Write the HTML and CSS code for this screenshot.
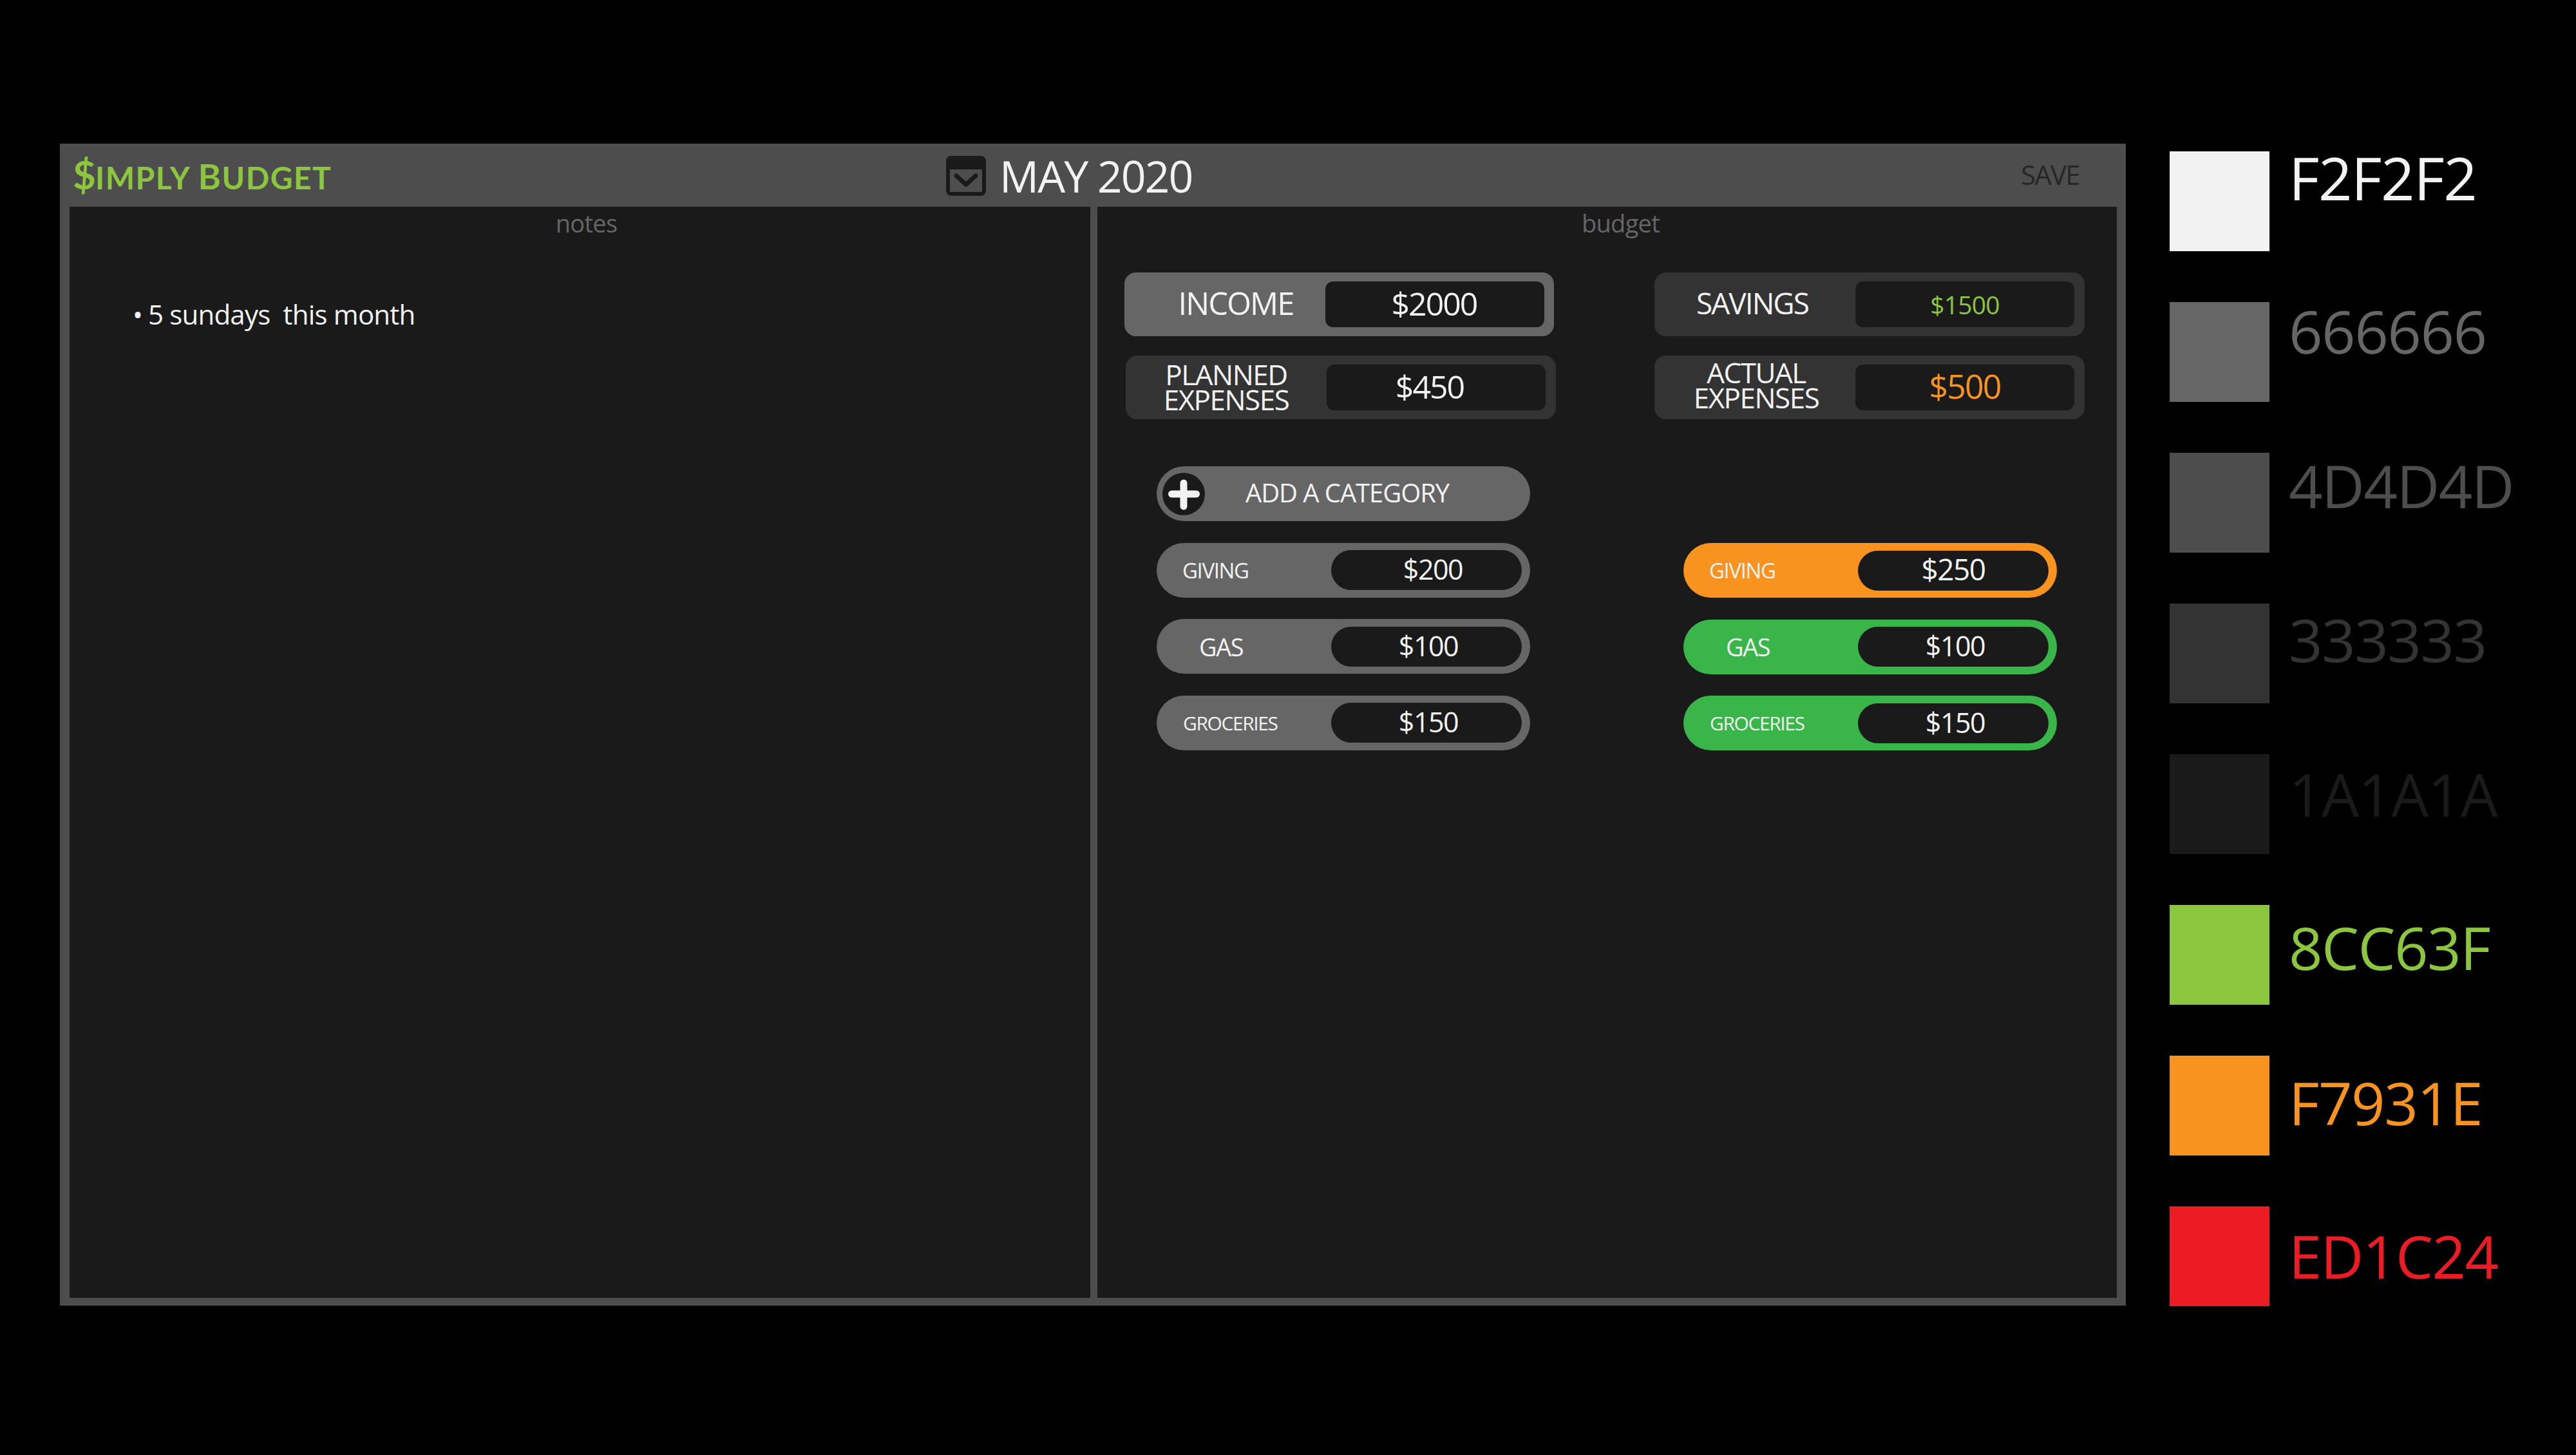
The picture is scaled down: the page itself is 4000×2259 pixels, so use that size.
FILE: index.html
```html
<!DOCTYPE html>
<html lang="en">
<head>
<meta charset="utf-8">
<title>Simply Budget</title>
<link rel="stylesheet" href="styles.css">
</head>
<body>
<main class="stage">
  <section class="window">
    <header class="topbar">
      <div class="logo"><span class="logo-dollar">$</span><span class="logo-small">IMPLY</span> <span class="logo-cap">B</span><span class="logo-small">UDGET</span></div>
      <div class="month">
        <svg class="cal" viewBox="0 0 62 62" aria-hidden="true"><rect width="62" height="62" rx="8" fill="#1a1a1a"/><rect x="6" y="21" width="50" height="35" fill="#4d4d4d"/><polyline points="16,31 31,44.5 46,31" fill="none" stroke="#1a1a1a" stroke-width="7" stroke-linecap="round" stroke-linejoin="round"/></svg>
        <span class="month-name">MAY 2020</span>
      </div>
      <div class="save">SAVE</div>
    </header>
    <div class="panels">
      <section class="panel notes">
        <h2 class="panel-title">notes</h2>
        <ul class="note-list"><li>5 sundays&nbsp; this month</li></ul>
      </section>
      <section class="panel budget">
        <h2 class="panel-title">budget</h2>
        <div class="summary">
          <div class="card card-light"><div class="card-label label-income">INCOME</div><div class="card-value val-income">$2000</div></div>
          <div class="card"><div class="card-label label-savings">SAVINGS</div><div class="card-value val-savings">$1500</div></div>
          <div class="card card-shift"><div class="card-label label-two">PLANNED<br>EXPENSES</div><div class="card-value val-planned">$450</div></div>
          <div class="card"><div class="card-label label-two label-actual">ACTUAL<br>EXPENSES</div><div class="card-value val-actual">$500</div></div>
        </div>
        <div class="cats">
          <div class="cat-col">
            <div class="add">
              <svg class="plus" viewBox="0 0 66 66" aria-hidden="true"><circle cx="33" cy="33" r="33" fill="#1a1a1a"/><path d="M14.500 33H52.500M33 16V52" stroke="#f2f2f2" stroke-width="11" stroke-linecap="round"/></svg>
              <span class="add-text">ADD A CATEGORY</span>
            </div>
            <div class="pill"><span class="pill-label lab-giving">GIVING</span><span class="pill-value v-r1">$200</span></div>
            <div class="pill"><span class="pill-label lab-gas">GAS</span><span class="pill-value v-r2">$100</span></div>
            <div class="pill"><span class="pill-label lab-groc">GROCERIES</span><span class="pill-value v-r3">$150</span></div>
          </div>
          <div class="cat-col cat-actual">
            <div class="pill pill-orange"><span class="pill-label lab-giving">GIVING</span><span class="pill-value v-a1">$250</span></div>
            <div class="pill pill-green"><span class="pill-label lab-gas">GAS</span><span class="pill-value v-a2">$100</span></div>
            <div class="pill pill-green"><span class="pill-label lab-groc">GROCERIES</span><span class="pill-value v-a2">$150</span></div>
          </div>
        </div>
      </section>
    </div>
  </section>
  <aside class="palette">
    <div class="swatch-row"><div class="swatch c-f2"></div><div class="code code-1 t-f2">F2F2F2</div></div>
    <div class="swatch-row"><div class="swatch c-66"></div><div class="code code-2 t-66">666666</div></div>
    <div class="swatch-row"><div class="swatch c-4d"></div><div class="code code-3 t-4d">4D4D4D</div></div>
    <div class="swatch-row"><div class="swatch c-33"></div><div class="code code-4 t-33">333333</div></div>
    <div class="swatch-row"><div class="swatch c-1a"></div><div class="code code-5 t-1a">1A1A1A</div></div>
    <div class="swatch-row"><div class="swatch c-8c"></div><div class="code code-6 t-8c">8CC63F</div></div>
    <div class="swatch-row"><div class="swatch c-f7"></div><div class="code code-7 t-f7">F7931E</div></div>
    <div class="swatch-row"><div class="swatch c-ed"></div><div class="code code-8 t-ed">ED1C24</div></div>
  </aside>
</main>
</body>
</html>
```

FILE: styles.css
```css
* { box-sizing: border-box; }
html, body { margin: 0; padding: 0; background: #000; }
body { font-family: "Open Sans", "Noto Sans", sans-serif; color: #f2f2f2; width: 4000px; height: 2259px; overflow: hidden; }
.stage { display: flex; align-items: flex-start; padding: 223px 0 0 93px; }

.window { width: 3208px; height: 1804px; background: #4d4d4d; display: flex; flex-direction: column; flex: none; }
.topbar { height: 98px; flex: none; display: grid; grid-template-columns: 1376px 1669px 1fr; align-items: center; }
.logo { padding-left: 20px; color: #8cc63f; font-family: "Lato", sans-serif; font-weight: 700; font-size: 48px; line-height: 94px; white-space: nowrap; letter-spacing: 1.500px; }
.logo-dollar { font-size: 62px; letter-spacing: -1px; }
.logo-cap { font-size: 54px; }
.month { display: flex; align-items: center; gap: 21px; }
.cal { width: 62px; height: 62px; flex: none; }
.month-name { font-size: 68px; line-height: 94px; letter-spacing: -2px; white-space: nowrap; }
.save { color: #262626; font-size: 42px; line-height: 48px; margin-bottom: 4px; letter-spacing: -1.800px; }

.panels { flex: 1; display: grid; grid-template-columns: 1585px 1583px; column-gap: 11px; padding: 0 14px 12px 15px; min-height: 0; }
.panel { background: #1a1a1a; position: relative; }
.panel-title { margin: 0; padding-top: 3px; font-size: 38px; line-height: 44px; font-weight: 400; color: #666; text-align: center; letter-spacing: -0.700px; }
.notes .panel-title { padding-left: 20px; }
.budget .panel-title { padding-left: 42px; }
.note-list { margin: 93px 0 0; padding: 0 0 0 98px; font-size: 42px; line-height: 54px; letter-spacing: -0.800px; list-style: none; }
.note-list li::before { content: "\2022"; margin-right: 9px; }

.summary { display: grid; grid-template-columns: 670px 670px; column-gap: 153px; row-gap: 30px; margin: 55px 0 0 42px; }
.card { height: 99px; width: 668px; background: #333; border-radius: 18px; display: flex; align-items: center; padding: 0 15px 0 0; }
.card-light { background: #666; width: 667px; }
.card-shift { margin-left: 2px; }
.card-label { width: 312px; flex: none; text-align: center; font-size: 46px; line-height: 39px; letter-spacing: -2px; white-space: nowrap; }
.label-income { font-size: 49px; padding: 0 0 4px 34px; }
.label-savings { padding: 0 8px 4px 0; }
.label-two { font-size: 44px; letter-spacing: -1.500px; padding-bottom: 2px; }
.label-actual { padding: 0 0 7px 4px; }
.card-value { width: 340px; height: 71px; flex: none; background: #1a1a1a; border-radius: 12px; display: flex; align-items: center; justify-content: center; font-size: 50px; letter-spacing: -2px; padding-bottom: 4px; }
.val-income { padding-right: 2px; }
.val-planned { padding-right: 20px; }
.val-savings { color: #8cc63f; font-size: 39px; letter-spacing: -0.800px; padding-bottom: 0; }
.val-actual { color: #f7931e; font-size: 52px; padding-bottom: 7px; }

.cats { display: flex; gap: 238px; margin: 73px 0 0 92px; }
.cat-col { width: 580px; display: flex; flex-direction: column; gap: 33.500px; }
.cat-actual { padding-top: 119px; }
.add { height: 85px; border-radius: 43px; background: #666; display: flex; align-items: center; padding-left: 9px; }
.plus { width: 66px; height: 66px; flex: none; }
.add-text { margin-left: 63px; margin-bottom: 4px; font-size: 40px; letter-spacing: -1.100px; white-space: nowrap; }
.pill { height: 85px; border-radius: 43px; background: #666; display: flex; align-items: center; justify-content: space-between; padding: 0 13px 0 0; }
.pill-orange { background: #f7931e; }
.pill-green { background: #39b54a; }
.pill-label { white-space: nowrap; letter-spacing: -1.400px; }
.lab-giving { font-size: 33px; padding-left: 40px; }
.lab-gas { font-size: 38px; padding-left: 66px; }
.lab-groc { font-size: 30px; padding-left: 41px; }
.pill-value { width: 296px; height: 62px; border-radius: 31px; background: #1a1a1a; display: flex; align-items: center; justify-content: center; font-size: 43px; letter-spacing: -1.500px; padding-bottom: 3px; }
.v-r1 { padding-left: 20px; }
.v-r2, .v-r3 { padding-left: 6px; }
.v-a1 { font-size: 46px; padding-bottom: 6px; }
.v-a2 { padding-left: 6px; }

.palette { margin-left: 68px; padding-top: 12px; display: flex; flex-direction: column; gap: 79px; }
.swatch-row { display: flex; align-items: flex-start; gap: 30px; height: 155px; }
.swatch { width: 155px; height: 155px; flex: none; }
.code { font-size: 92px; line-height: 92px; letter-spacing: -1.500px; white-space: nowrap; }
.code-1 { margin-top: -5px; }
.code-2 { margin-top: -1px; }
.code-3 { margin-top: 5px; }
.code-4 { margin-top: 10px; }
.code-5 { margin-top: 16px; }
.code-6 { margin-top: 20px; }
.code-7 { margin-top: 27px; }
.code-8 { margin-top: 31px; }
.c-f2 { background: #f2f2f2; } .t-f2 { color: #f2f2f2; }
.c-66 { background: #666; } .t-66 { color: #666; }
.c-4d { background: #4d4d4d; } .t-4d { color: #4d4d4d; }
.c-33 { background: #333; } .t-33 { color: #333; }
.c-1a { background: #1a1a1a; } .t-1a { color: #1a1a1a; }
.c-8c { background: #8cc63f; } .t-8c { color: #8cc63f; }
.c-f7 { background: #f7931e; } .t-f7 { color: #f7931e; }
.c-ed { background: #ed1c24; } .t-ed { color: #ed1c24; }
```
